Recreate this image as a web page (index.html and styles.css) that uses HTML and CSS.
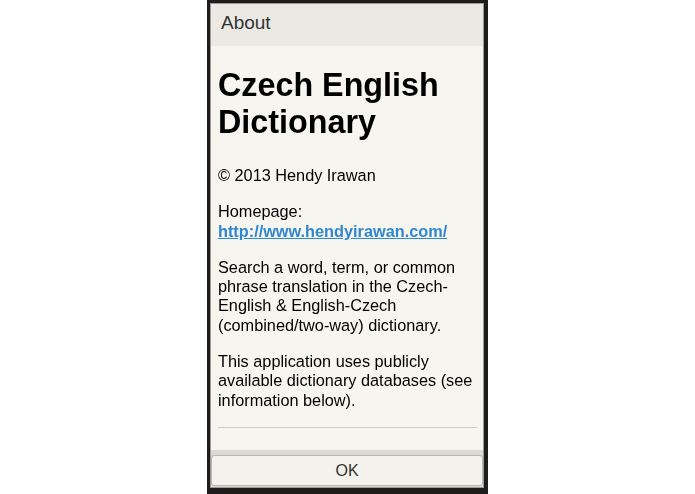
FILE: index.html
```html
<!DOCTYPE html>
<html>
<head>
<meta charset="utf-8">
<link rel="stylesheet" href="styles.css">
</head>
<body>
<div class="frame">
  <div class="dialog">
    <div class="title">About</div>
    <div class="content">
      <h1 class="heading">Czech English Dictionary</h1>
      <p class="para">© 2013 Hendy Irawan</p>
      <p class="para">Homepage:<br><a class="link" href="#">http://www.hendyirawan.com/</a></p>
      <p class="para">Search a word, term, or common phrase translation in the Czech-English &amp; English-Czech (combined/two-way) dictionary.</p>
      <p class="para">This application uses publicly available dictionary databases (see information below).</p>
      <hr class="rule">
      <p class="para">This dictionary is based on the publicly available databases.</p>
    </div>
    <div class="footer">
      <div class="button">OK</div>
    </div>
  </div>
</div>
</body>
</html>
```

FILE: styles.css
```css
html, body {
  margin: 0;
  padding: 0;
  background: #ffffff;
}
body {
  font-family: "Liberation Sans", Arial, sans-serif;
}
.frame {
  width: 281px;
  height: 494px;
  margin-left: 207px;
  box-sizing: border-box;
  padding: 3px 4px 6px 3px;
  background: #1d1d1d;
}
.dialog {
  height: 100%;
  box-sizing: border-box;
  border: 1px solid #9c9b98;
  background: #f7f5f0;
  display: flex;
  flex-direction: column;
}
.title {
  height: 42px;
  flex: none;
  background: #ebe9e3;
  color: #333333;
  font-size: 19px;
  display: flex;
  align-items: center;
  padding-left: 10px;
  padding-bottom: 4px;
  box-sizing: border-box;
}
.content {
  flex: 1;
  min-height: 0;
  overflow: hidden;
  padding: 0 6px 0 7px;
  color: #000000;
  -webkit-mask-image: linear-gradient(to bottom, #000 calc(100% - 10px), rgba(0,0,0,0.12) calc(100% - 4px));
  mask-image: linear-gradient(to bottom, #000 calc(100% - 10px), rgba(0,0,0,0.12) calc(100% - 4px));
}
.heading {
  font-size: 32.3px;
  line-height: 37px;
  font-weight: bold;
  margin: 21px 0 25px 0;
}
.para {
  font-size: 16.3px;
  line-height: 19.3px;
  margin: 17px 0;
}
.heading + .para {
  margin-top: 25px;
}
.link {
  color: #2f88cf;
  font-weight: bold;
  text-decoration: underline;
}
.rule {
  border: none;
  border-top: 1px solid #cfcdc7;
  height: 0;
  margin: 14px 0 0 0;
}
.rule + .para {
  margin-top: 19px;
}
.footer {
  flex: none;
  background: #dbd9d3;
  padding: 5px 0 1px 0;
}
.button {
  height: 31px;
  box-sizing: border-box;
  border: 1px solid #b9b7b1;
  border-radius: 3px;
  background: #f4f2ed;
  color: #333333;
  font-size: 16px;
  display: flex;
  align-items: center;
  justify-content: center;
}
```
